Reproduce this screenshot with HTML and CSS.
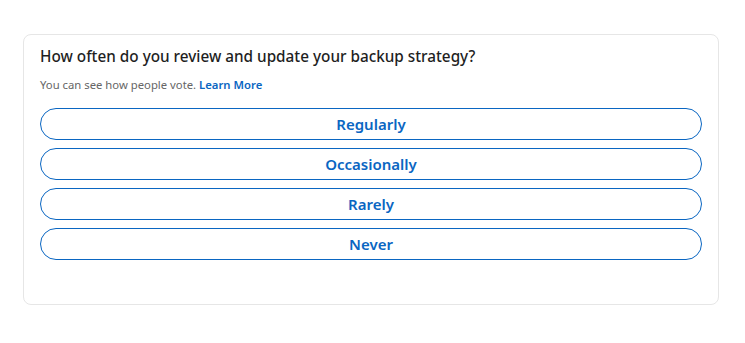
FILE: index.html
```html
<!DOCTYPE html>
<html lang="en">
<head>
    <meta charset="UTF-8">
    <meta name="viewport" content="width=device-width, initial-scale=1.0">
    <title>Poll</title>
    <link rel="stylesheet" href="styles.css">
</head>
<body>
    <div class="poll">
        <h2 class="question">How often do you review and update your backup strategy?</h2>
        <p class="note">You can see how people vote. <a href="#">Learn More</a></p>
        <div class="options">
            <button>Regularly</button>
            <button>Occasionally</button>
            <button>Rarely</button>
            <button>Never</button>
        </div>
    </div>
</body>
</html>
```

FILE: styles.css
```css
body {
    margin: 0;
    padding: 34px 26px 0 23px;
    font-family: "Noto Sans", "Open Sans", sans-serif;
    background: #fff;
    color: #1f1f1f;
}

.poll {
    border: 1px solid #e6e6e6;
    border-radius: 8px;
    padding: 11px 16px 43px 16px;
    height: 215px;
}

.question {
    margin: 0;
    font-size: 15.3px;
    font-weight: 500;
    line-height: 20px;
    color: #1f1f1f;
}

.note {
    margin: 11px 0 15px;
    font-size: 11.3px;
    line-height: 16px;
    color: #666;
}

.note a {
    color: #0a66c2;
    font-weight: 600;
    text-decoration: none;
}

.options {
    display: flex;
    flex-direction: column;
    gap: 8px;
}

.options button {
    height: 32px;
    border: 1px solid #0a66c2;
    border-radius: 16px;
    background: #fff;
    color: #0a66c2;
    font-family: inherit;
    font-size: 15px;
    font-weight: 600;
    cursor: pointer;
}
```
